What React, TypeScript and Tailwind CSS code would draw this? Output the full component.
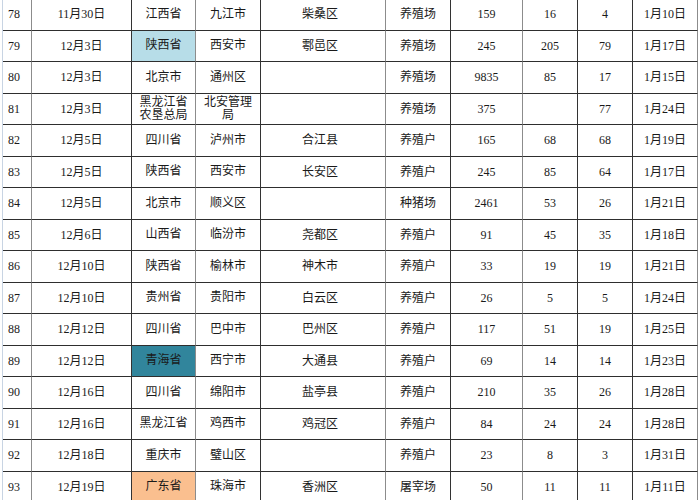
import React from "react";

type Row = {
  i: string;
  d: string;
  p: React.ReactNode;
  pc?: string;
  c: React.ReactNode;
  dist: string;
  t: string;
  n1: string;
  n2: string;
  n3: string;
  e: string;
};

const rows: Row[] = [
  { i: "78", d: "11月30日", p: "江西省", c: "九江市", dist: "柴桑区", t: "养殖场", n1: "159", n2: "16", n3: "4", e: "1月10日" },
  { i: "79", d: "12月3日", p: "陕西省", pc: "bg-[#b7dde8]", c: "西安市", dist: "鄠邑区", t: "养殖场", n1: "245", n2: "205", n3: "79", e: "1月17日" },
  { i: "80", d: "12月3日", p: "北京市", c: "通州区", dist: "", t: "养殖场", n1: "9835", n2: "85", n3: "17", e: "1月15日" },
  {
    i: "81",
    d: "12月3日",
    p: (
      <>
        黑龙江省
        <br />
        农垦总局
      </>
    ),
    c: (
      <>
        北安管理
        <br />
        局
      </>
    ),
    dist: "",
    t: "养殖场",
    n1: "375",
    n2: "",
    n3: "77",
    e: "1月24日",
  },
  { i: "82", d: "12月5日", p: "四川省", c: "泸州市", dist: "合江县", t: "养殖户", n1: "165", n2: "68", n3: "68", e: "1月19日" },
  { i: "83", d: "12月5日", p: "陕西省", c: "西安市", dist: "长安区", t: "养殖户", n1: "245", n2: "85", n3: "64", e: "1月17日" },
  { i: "84", d: "12月5日", p: "北京市", c: "顺义区", dist: "", t: "种猪场", n1: "2461", n2: "53", n3: "26", e: "1月21日" },
  { i: "85", d: "12月6日", p: "山西省", c: "临汾市", dist: "尧都区", t: "养殖户", n1: "91", n2: "45", n3: "35", e: "1月18日" },
  { i: "86", d: "12月10日", p: "陕西省", c: "榆林市", dist: "神木市", t: "养殖户", n1: "33", n2: "19", n3: "19", e: "1月21日" },
  { i: "87", d: "12月10日", p: "贵州省", c: "贵阳市", dist: "白云区", t: "养殖户", n1: "26", n2: "5", n3: "5", e: "1月24日" },
  { i: "88", d: "12月12日", p: "四川省", c: "巴中市", dist: "巴州区", t: "养殖户", n1: "117", n2: "51", n3: "19", e: "1月25日" },
  { i: "89", d: "12月12日", p: "青海省", pc: "bg-[#31859c]", c: "西宁市", dist: "大通县", t: "养殖户", n1: "69", n2: "14", n3: "14", e: "1月23日" },
  { i: "90", d: "12月16日", p: "四川省", c: "绵阳市", dist: "盐亭县", t: "养殖户", n1: "210", n2: "35", n3: "26", e: "1月28日" },
  { i: "91", d: "12月16日", p: "黑龙江省", c: "鸡西市", dist: "鸡冠区", t: "养殖户", n1: "84", n2: "24", n3: "24", e: "1月28日" },
  { i: "92", d: "12月18日", p: "重庆市", c: "璧山区", dist: "", t: "养殖户", n1: "23", n2: "8", n3: "3", e: "1月31日" },
  { i: "93", d: "12月19日", p: "广东省", pc: "bg-[#fabf8f]", c: "珠海市", dist: "香洲区", t: "屠宰场", n1: "50", n2: "11", n3: "11", e: "1月11日" },
];

const cell = "h-full flex items-center border-r border-b border-b-[#2e2e2e]";
const gray = "border-r-[#8c8c8c]";
const dark = "border-r-[#333333]";

export default function App() {
  return (
    <div
      className="w-[700px] h-[500px] overflow-hidden bg-white text-[12px] text-[#1a1a1a]"
      style={{ fontFamily: '"Liberation Serif", "Noto Sans CJK SC", serif' }}
    >
      <div className="ml-[2px] border-l border-l-[#c8d4e3] -mt-[1px] w-[696px]">
        {rows.map((r) => (
          <div
            key={r.i}
            className="grid h-[31.5px] grid-cols-[29px_100px_64px_65px_125px_65px_72px_55px_55px_65px]"
          >
            <div className={`${cell} ${gray} pl-[5px]`}>{r.i}</div>
            <div className={`${cell} ${dark} justify-center`}>{r.d}</div>
            <div className={`${cell} ${gray} justify-center text-center leading-[13px] ${r.pc ?? ""}`}>{r.p}</div>
            <div className={`${cell} ${dark} justify-center text-center leading-[13px]`}>{r.c}</div>
            <div className={`${cell} ${gray} pl-[41px]`}>{r.dist}</div>
            <div className={`${cell} ${dark} justify-center`}>{r.t}</div>
            <div className={`${cell} ${gray} justify-center`}>{r.n1}</div>
            <div className={`${cell} ${dark} justify-center`}>{r.n2}</div>
            <div className={`${cell} ${dark} justify-center`}>{r.n3}</div>
            <div className={`${cell} ${gray} justify-center`}>{r.e}</div>
          </div>
        ))}
      </div>
    </div>
  );
}
